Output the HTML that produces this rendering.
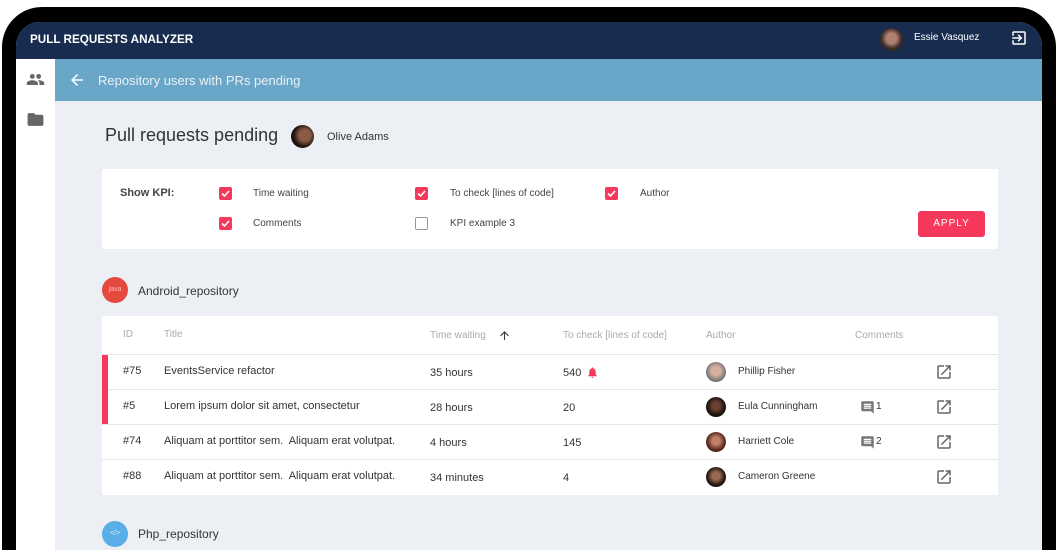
<!DOCTYPE html>
<html><head><meta charset="utf-8"><style>
*{box-sizing:border-box;margin:0;padding:0}
html,body{width:1058px;height:550px;overflow:hidden}
body{background:#fff;font-family:"Liberation Sans",sans-serif;position:relative}
.a{position:absolute}
.frame{left:2px;top:7px;width:1054px;height:543px;background:#000;border-radius:40px 40px 0 0}
.screen{left:16px;top:22px;width:1026px;height:528px;background:#eceff4;border-radius:24px 24px 0 0;overflow:hidden}
.hdr{left:0;top:0;width:1026px;height:37px;background:#172c4f;color:#fff}
.side{left:0;top:37px;width:39px;height:600px;background:#fff}
.bar{left:39px;top:37px;width:987px;height:42px;background:#6aa6c8;color:#e8f1f7;font-size:13px}
.card{background:#fff;border-radius:2px}
.t{font-size:11px;color:#333}
.g{font-size:10px;color:#aaa}
.cb{width:13px;height:13px;background:#f5385b;border-radius:2px}
.cb svg{display:block}
.av{width:20px;height:20px;border-radius:50%}
.row{left:86px;width:896px;height:35px;border-top:1px solid #e6e6e6}
</style></head><body>
<div class="a frame"></div>
<div class="a screen">
 <div class="a hdr">
  <div class="a" style="left:14px;top:11px;font-size:11.7px;font-weight:bold">PULL REQUESTS ANALYZER</div>
  <div class="a av" style="left:864px;top:6px;width:23px;height:23px;background:radial-gradient(circle at 50% 45%,#b08070 30%,#3a2a25 60%)"></div>
  <div class="a" style="left:898px;top:10px;font-size:10px">Essie Vasquez</div>
  <svg class="a" style="left:994px;top:7px" width="18" height="18" viewBox="0 0 24 24"><path fill="#fff" d="M10.09 15.59L11.5 17l5-5-5-5-1.41 1.41L12.67 11H3v2h9.67l-2.58 2.59zM19 3H5c-1.11 0-2 .9-2 2v4h2V5h14v14H5v-4H3v4c0 1.1.89 2 2 2h14c1.1 0 2-.9 2-2V5c0-1.1-.9-2-2-2z"/></svg>
 </div>
 <div class="a side">
  <svg class="a" style="left:10px;top:11px" width="19" height="19" viewBox="0 0 24 24"><path fill="#666" d="M16 11c1.66 0 2.99-1.34 2.99-3S17.66 5 16 5c-1.66 0-3 1.34-3 3s1.34 3 3 3zm-8 0c1.66 0 2.99-1.34 2.99-3S9.66 5 8 5C6.34 5 5 6.34 5 8s1.34 3 3 3zm0 2c-2.33 0-7 1.17-7 3.5V19h14v-2.5c0-2.33-4.67-3.5-7-3.5zm8 0c-.29 0-.62.02-.97.05 1.16.84 1.97 1.97 1.97 3.45V19h6v-2.5c0-2.33-4.67-3.5-7-3.5z"/></svg>
  <svg class="a" style="left:10px;top:51px" width="19" height="19" viewBox="0 0 24 24"><path fill="#666" d="M10 4H4c-1.1 0-2 .9-2 2v12c0 1.1.9 2 2 2h16c1.1 0 2-.9 2-2V8c0-1.1-.9-2-2-2h-8l-2-2z"/></svg>
 </div>
 <div class="a bar">
  <svg class="a" style="left:13px;top:12px" width="18" height="18" viewBox="0 0 24 24"><path fill="#fff" d="M20 11H7.83l5.59-5.59L12 4l-8 8 8 8 1.41-1.41L7.83 13H20v-2z"/></svg>
  <div class="a" style="left:43px;top:14px">Repository users with PRs pending</div>
 </div>
 <div class="a" style="left:89px;top:103px;font-size:18px;color:#333">Pull requests pending</div>
 <div class="a av" style="left:275px;top:103px;width:23px;height:23px;background:radial-gradient(circle at 60% 45%,#8a5a45 30%,#1e1410 60%)"></div>
 <div class="a t" style="left:311px;top:109px">Olive Adams</div>

 <div class="a card" style="left:86px;top:147px;width:896px;height:80px">
  <div class="a t" style="left:18px;top:18px;font-weight:bold;color:#444">Show KPI:</div>
  <div class="a cb" style="left:117px;top:18px"><svg width="13" height="13" viewBox="0 0 13 13"><path d="M3 6.5l2.5 2.5 4.5-5" stroke="#fff" stroke-width="1.6" fill="none"/></svg></div>
  <div class="a g" style="left:151px;top:19px;color:#444">Time waiting</div>
  <div class="a cb" style="left:313px;top:18px"><svg width="13" height="13" viewBox="0 0 13 13"><path d="M3 6.5l2.5 2.5 4.5-5" stroke="#fff" stroke-width="1.6" fill="none"/></svg></div>
  <div class="a g" style="left:348px;top:19px;color:#444">To check [lines of code]</div>
  <div class="a cb" style="left:503px;top:18px"><svg width="13" height="13" viewBox="0 0 13 13"><path d="M3 6.5l2.5 2.5 4.5-5" stroke="#fff" stroke-width="1.6" fill="none"/></svg></div>
  <div class="a g" style="left:538px;top:19px;color:#444">Author</div>
  <div class="a cb" style="left:117px;top:48px"><svg width="13" height="13" viewBox="0 0 13 13"><path d="M3 6.5l2.5 2.5 4.5-5" stroke="#fff" stroke-width="1.6" fill="none"/></svg></div>
  <div class="a g" style="left:151px;top:49px;color:#444">Comments</div>
  <div class="a" style="left:313px;top:48px;width:13px;height:13px;border:1.5px solid #999;border-radius:2px"></div>
  <div class="a g" style="left:348px;top:49px;color:#444">KPI example 3</div>
  <div class="a" style="left:816px;top:42px;width:67px;height:26px;background:#f5385b;border-radius:3px;color:#fff;font-size:10px;letter-spacing:1px;text-align:center;line-height:26px">APPLY</div>
 </div>

 <div class="a" style="left:86px;top:255px;width:26px;height:26px;border-radius:50%;background:#e5483e;color:#fbb;font-size:7px;text-align:center;line-height:26px">java</div>
 <div class="a t" style="left:122px;top:262px;font-size:12px">Android_repository</div>

 <div class="a card" style="left:86px;top:294px;width:896px;height:179px"></div>
 <div class="a g" style="left:107px;top:307px">ID</div>
 <div class="a g" style="left:148px;top:307px">Title</div>
 <div class="a g" style="left:414px;top:308px">Time waiting</div>
 <svg class="a" style="left:482px;top:307px" width="13" height="13" viewBox="0 0 24 24"><path fill="#333" d="M4 12l1.41 1.41L11 7.83V20h2V7.83l5.58 5.59L20 12l-8-8-8 8z"/></svg>
 <div class="a g" style="left:547px;top:308px">To check [lines of code]</div>
 <div class="a g" style="left:690px;top:308px">Author</div>
 <div class="a g" style="left:839px;top:308px">Comments</div>

 <div class="a row" style="top:332px"></div>
 <div class="a row" style="top:367px"></div>
 <div class="a row" style="top:402px"></div>
 <div class="a row" style="top:437px"></div>
 <div class="a" style="left:86px;top:333px;width:6px;height:69px;background:#f5385b"></div>

 <div class="a t" style="left:107px;top:343px">#75</div><div class="a t" style="left:148px;top:343px">EventsService refactor</div><div class="a t" style="left:414px;top:345px">35 hours</div><div class="a t" style="left:547px;top:345px">540</div>
 <svg class="a" style="left:570px;top:344px" width="13" height="13" viewBox="0 0 24 24"><path fill="#f5385b" d="M12 22c1.1 0 2-.9 2-2h-4c0 1.1.89 2 2 2zm6-6v-5c0-3.07-1.64-5.64-4.5-6.32V4c0-.83-.67-1.5-1.5-1.5s-1.5.67-1.5 1.5v.68C7.63 5.36 6 7.92 6 11v5l-2 2v1h16v-1l-2-2z"/></svg>
 <div class="a t" style="left:107px;top:378px">#5</div><div class="a t" style="left:148px;top:378px">Lorem ipsum dolor sit amet, consectetur</div><div class="a t" style="left:414px;top:380px">28 hours</div><div class="a t" style="left:547px;top:380px">20</div>
 <div class="a t" style="left:107px;top:413px">#74</div><div class="a t" style="left:148px;top:413px">Aliquam at porttitor sem.&nbsp; Aliquam erat volutpat.</div><div class="a t" style="left:414px;top:415px">4 hours</div><div class="a t" style="left:547px;top:415px">145</div>
 <div class="a t" style="left:107px;top:448px">#88</div><div class="a t" style="left:148px;top:448px">Aliquam at porttitor sem.&nbsp; Aliquam erat volutpat.</div><div class="a t" style="left:414px;top:450px">34 minutes</div><div class="a t" style="left:547px;top:450px">4</div>

 <div class="a av" style="left:690px;top:340px;background:radial-gradient(circle at 50% 45%,#d8b0a0 30%,#777 65%)"></div>
 <div class="a av" style="left:690px;top:375px;background:radial-gradient(circle at 50% 45%,#6a4030 25%,#1a1410 60%)"></div>
 <div class="a av" style="left:690px;top:410px;background:radial-gradient(circle at 50% 45%,#c0806a 25%,#5a2a20 60%)"></div>
 <div class="a av" style="left:690px;top:445px;background:radial-gradient(circle at 50% 45%,#9a6a50 25%,#201810 60%)"></div>
 <div class="a t" style="left:722px;top:344px;font-size:10px">Phillip Fisher</div>
 <div class="a t" style="left:722px;top:379px;font-size:10px">Eula Cunningham</div>
 <div class="a t" style="left:722px;top:414px;font-size:10px">Harriett Cole</div>
 <div class="a t" style="left:722px;top:449px;font-size:10px">Cameron Greene</div>

 <svg class="a" style="left:844px;top:378px" width="15" height="15" viewBox="0 0 24 24"><path fill="#777" d="M21.99 4c0-1.1-.89-2-1.99-2H4c-1.1 0-2 .9-2 2v12c0 1.1.9 2 2 2h14l4 4-.01-18zM18 14H6v-2h12v2zm0-3H6V9h12v2zm0-3H6V6h12v2z"/></svg>
 <div class="a t" style="left:860px;top:379px;font-size:10px">1</div>
 <svg class="a" style="left:844px;top:413px" width="15" height="15" viewBox="0 0 24 24"><path fill="#777" d="M21.99 4c0-1.1-.89-2-1.99-2H4c-1.1 0-2 .9-2 2v12c0 1.1.9 2 2 2h14l4 4-.01-18zM18 14H6v-2h12v2zm0-3H6V9h12v2zm0-3H6V6h12v2z"/></svg>
 <div class="a t" style="left:860px;top:414px;font-size:10px">2</div>

 <svg class="a" style="left:919px;top:341px" width="18" height="18" viewBox="0 0 24 24"><path fill="#666" d="M19 19H5V5h7V3H5c-1.11 0-2 .9-2 2v14c0 1.1.89 2 2 2h14c1.1 0 2-.9 2-2v-7h-2v7zM14 3v2h3.59l-9.83 9.83 1.41 1.41L19 6.41V10h2V3h-7z"/></svg>
 <svg class="a" style="left:919px;top:376px" width="18" height="18" viewBox="0 0 24 24"><path fill="#666" d="M19 19H5V5h7V3H5c-1.11 0-2 .9-2 2v14c0 1.1.89 2 2 2h14c1.1 0 2-.9 2-2v-7h-2v7zM14 3v2h3.59l-9.83 9.83 1.41 1.41L19 6.41V10h2V3h-7z"/></svg>
 <svg class="a" style="left:919px;top:411px" width="18" height="18" viewBox="0 0 24 24"><path fill="#666" d="M19 19H5V5h7V3H5c-1.11 0-2 .9-2 2v14c0 1.1.89 2 2 2h14c1.1 0 2-.9 2-2v-7h-2v7zM14 3v2h3.59l-9.83 9.83 1.41 1.41L19 6.41V10h2V3h-7z"/></svg>
 <svg class="a" style="left:919px;top:446px" width="18" height="18" viewBox="0 0 24 24"><path fill="#666" d="M19 19H5V5h7V3H5c-1.11 0-2 .9-2 2v14c0 1.1.89 2 2 2h14c1.1 0 2-.9 2-2v-7h-2v7zM14 3v2h3.59l-9.83 9.83 1.41 1.41L19 6.41V10h2V3h-7z"/></svg>

 <div class="a" style="left:86px;top:499px;width:26px;height:26px;border-radius:50%;background:#5aaee8;color:#d8ecfb;font-size:7px;text-align:center;line-height:26px">&lt;/&gt;</div>
 <div class="a t" style="left:122px;top:505px;font-size:12px">Php_repository</div>
</div>
</body></html>
